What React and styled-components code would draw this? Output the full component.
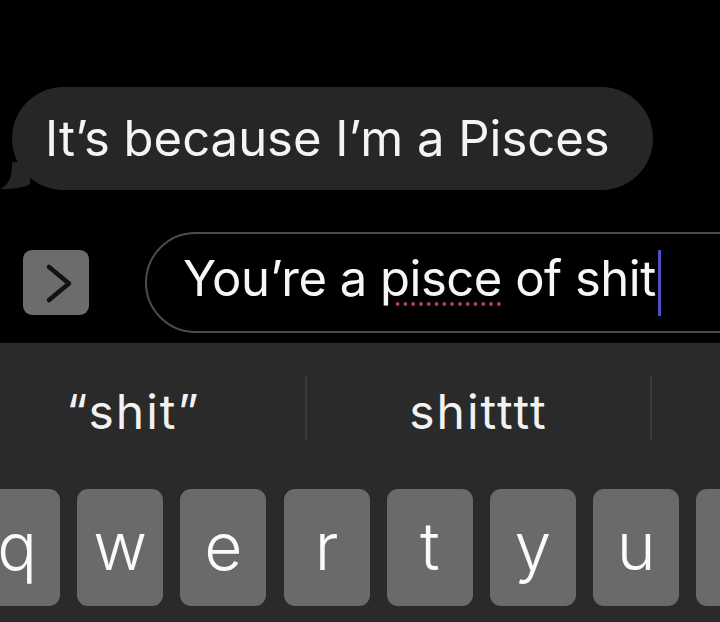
import React from 'react'
import styled, { createGlobalStyle } from 'styled-components'

const GlobalStyle = createGlobalStyle`
  html, body {
    margin: 0;
    padding: 0;
    background: #000;
  }
  body {
    font-family: Inter, "Noto Sans", "Liberation Sans", sans-serif;
    -webkit-font-smoothing: antialiased;
  }
`

const Screen = styled.div`
  width: 720px;
  height: 622px;
  overflow: hidden;
  background: #000;
  display: flex;
  flex-direction: column;
`

const Thread = styled.div`
  padding: 87px 0 0 12px;
`

const Bubble = styled.div`
  position: relative;
  width: 641px;
  height: 103px;
  box-sizing: border-box;
  padding-left: 33px;
  display: flex;
  align-items: center;
  border-radius: 52px;
  background: #262628;
  color: #f4f4f4;
  font-size: 49px;
  letter-spacing: 0;
  white-space: nowrap;
`

const Tail = styled.svg`
  position: absolute;
  left: -12px;
  bottom: 0;
`

const Composer = styled.div`
  display: flex;
  align-items: center;
  margin-top: 42px;
  height: 101px;
`

const ExpandButton = styled.div`
  flex: none;
  width: 66px;
  height: 65px;
  margin-left: 23px;
  border-radius: 9px;
  background: #6c6c6c;
  display: flex;
`

const Field = styled.div`
  flex: none;
  width: 640px;
  height: 101px;
  box-sizing: border-box;
  margin-left: 56px;
  padding-left: 36px;
  border: 2px solid #4c4c4e;
  border-radius: 52px;
  display: flex;
  align-items: center;
  color: #f6f6f6;
  font-size: 49px;
  letter-spacing: -0.5px;
  white-space: nowrap;
`

const Misspelled = styled.span`
  text-decoration: underline dotted #b0404f;
  text-decoration-thickness: 4px;
  text-underline-offset: 6px;
`

const Caret = styled.span`
  display: inline-block;
  width: 3px;
  height: 66px;
  margin-left: 2px;
  background: #4c50c4;
  vertical-align: middle;
`

const Keyboard = styled.div`
  flex: 1;
  margin-top: 10px;
  background: #2a2a2a;
  display: flex;
  flex-direction: column;
`

const Suggestions = styled.div`
  display: grid;
  grid-template-columns: repeat(3, 345px);
  margin-left: -38px;
  height: 146px;
  align-items: center;
`

const Suggestion = styled.div`
  height: 64px;
  display: flex;
  align-items: center;
  justify-content: center;
  color: #f2f2f2;
  font-size: 48px;
  letter-spacing: 2px;
  border-right: ${props => (props.divider ? '2px solid #3a3a3a' : 'none')};
  margin-top: -16px;
  padding-top: 6px;
  box-sizing: border-box;
`

const KeyRow = styled.div`
  display: flex;
  gap: 17.2px;
  margin-left: -26px;
`

const Key = styled.div`
  flex: none;
  width: 86px;
  height: 117px;
  border-radius: 11px;
  background: #6a6a6a;
  color: #fafafa;
  display: flex;
  align-items: center;
  justify-content: center;
  font-size: 66px;
  font-weight: 300;
  padding-bottom: 4px;
  box-sizing: border-box;
`

const keys = ['q', 'w', 'e', 'r', 't', 'y', 'u', 'i']

export default function App() {
  return (
    <>
      <GlobalStyle />
      <Screen>
        <Thread>
          <Bubble>
            <Tail width="30" height="28" viewBox="0 0 30 28">
              <path d="M30 0 L30 22 C24 26 14 27 0 27 C10 22 12 14 12 0 Z" fill="#262628" />
            </Tail>
            It’s because I’m a Pisces
          </Bubble>
        </Thread>
        <Composer>
          <ExpandButton>
            <svg width="66" height="65" viewBox="0 0 66 65">
              <path d="M26 17 L46 33.5 L26 50" fill="none" stroke="#121212" strokeWidth="4.5" strokeLinecap="round" strokeLinejoin="round" />
            </svg>
          </ExpandButton>
          <Field>
            <span>
              You’re a <Misspelled>pisce</Misspelled> of shit<Caret />
            </span>
          </Field>
        </Composer>
        <Keyboard>
          <Suggestions>
            <Suggestion divider>“shit”</Suggestion>
            <Suggestion divider>shitttt</Suggestion>
            <Suggestion />
          </Suggestions>
          <KeyRow>
            {keys.map(k => (
              <Key key={k}>{k}</Key>
            ))}
          </KeyRow>
        </Keyboard>
      </Screen>
    </>
  )
}
